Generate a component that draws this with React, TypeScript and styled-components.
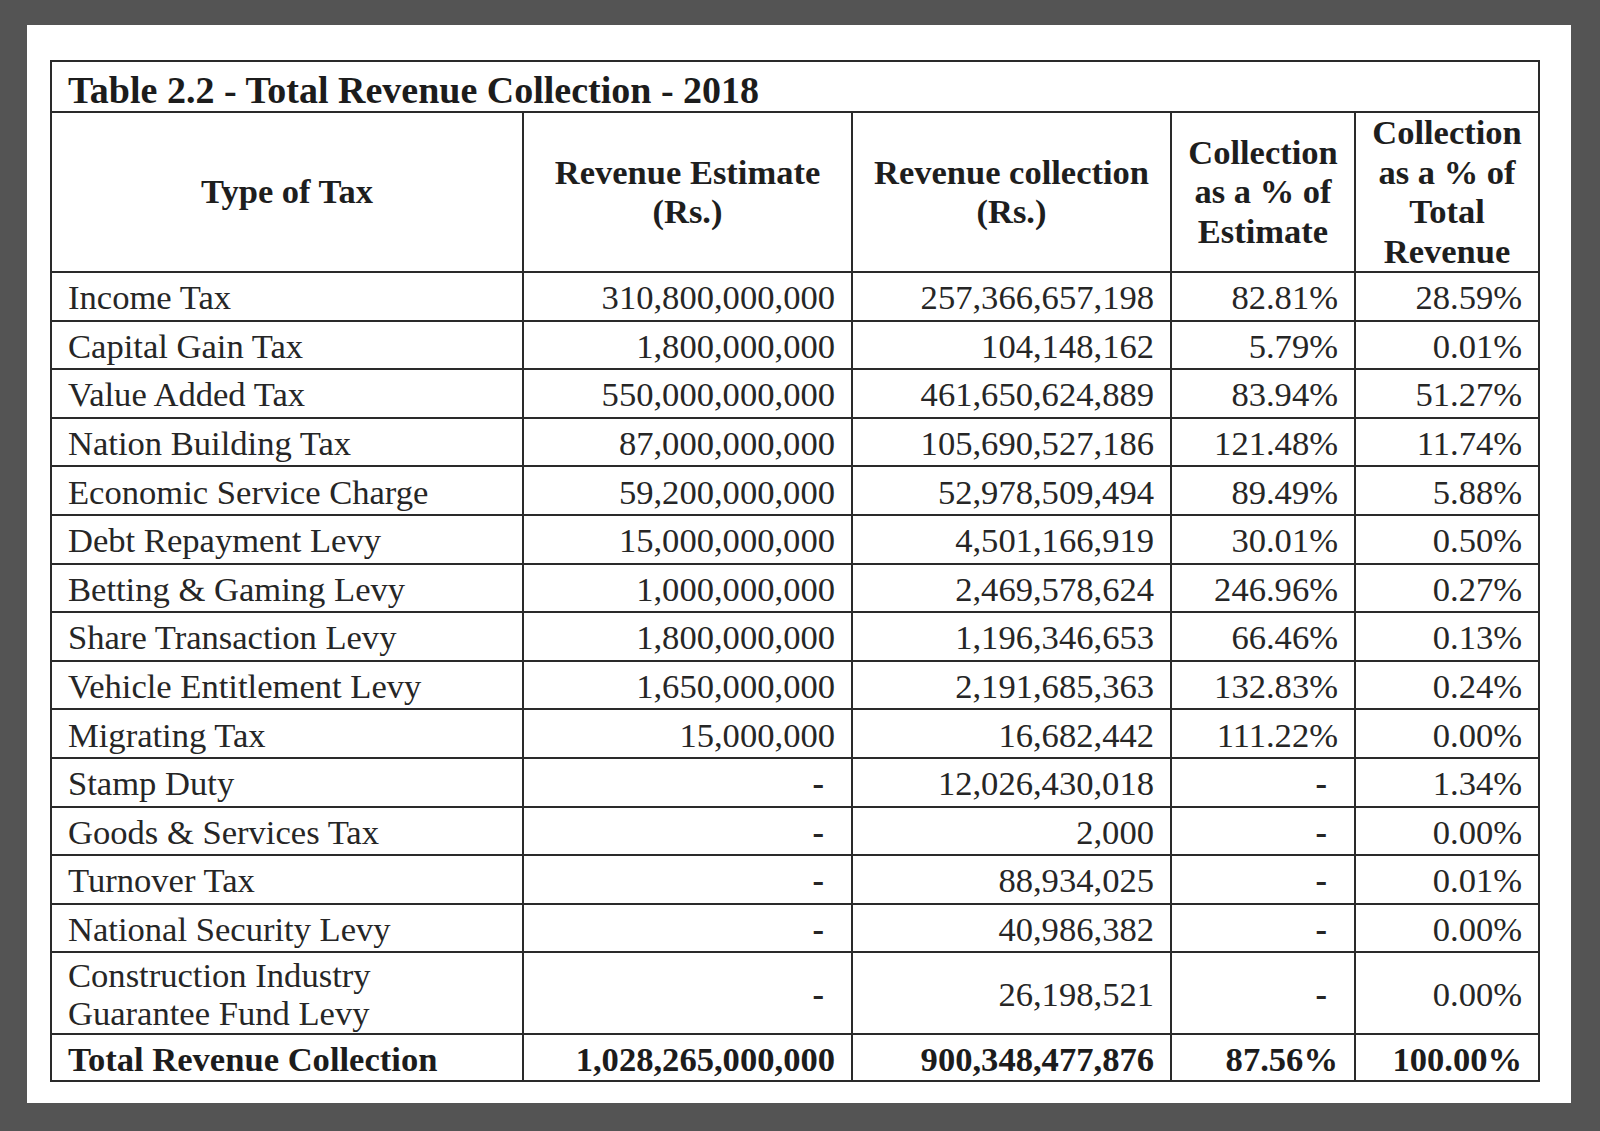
import React from "react";
import styled, { createGlobalStyle } from "styled-components";

const GlobalStyle = createGlobalStyle`
  html, body {
    margin: 0;
    padding: 0;
    background: #545454;
  }
  #root {
    min-height: 1131px;
  }
`;

const Frame = styled.div`
  box-sizing: border-box;
  width: 1600px;
  height: 1131px;
  padding: 25px 29px 28px 27px;
  background: #545454;
`;

const Sheet = styled.div`
  box-sizing: border-box;
  height: 100%;
  background: #ffffff;
  padding: 35px 33px 0 23px;
`;

const Table = styled.table`
  width: 1488px;
  table-layout: fixed;
  border-collapse: collapse;
  font-family: "Liberation Serif", "Times New Roman", serif;
  color: #262626;
  border: 2px solid #2a2a2a;
`;

const TitleRow = styled.tr`
  height: 51px;
`;

const TitleCell = styled.td`
  border: 2px solid #2a2a2a;
  padding: 6px 16px 0 16px;
  font-size: 38px;
  font-weight: bold;
  color: #1c1c1c;
  text-align: left;
  vertical-align: middle;
  line-height: 40px;
  white-space: nowrap;
`;

const HeadRow = styled.tr`
  height: 159px;
`;

const HeadCell = styled.th`
  border: 2px solid #2a2a2a;
  padding: 0 6px;
  font-size: 34.5px;
  font-weight: bold;
  color: #1e1e1e;
  line-height: 39.5px;
  text-align: center;
  vertical-align: middle;
`;

const BodyRow = styled.tr<{ $h: number }>`
  height: ${(p) => p.$h}px;
`;

const Cell = styled.td<{ $align?: "left" | "right"; $bold?: boolean; $dash?: boolean }>`
  border: 2px solid #2a2a2a;
  padding: 2px ${(p) => (p.$dash ? 27 : 16)}px 0 16px;
  font-size: 34.6px;
  line-height: 38px;
  font-weight: ${(p) => (p.$bold || p.$dash ? "bold" : "normal")};
  color: ${(p) => (p.$bold ? "#1c1c1c" : "#262626")};
  text-align: ${(p) => p.$align ?? "right"};
  vertical-align: middle;
  white-space: nowrap;
`;

type Row = {
  name: React.ReactNode;
  est: string;
  col: string;
  pe: string;
  pt: string;
  h?: number;
};

const rows: Row[] = [
  { name: "Income Tax", est: "310,800,000,000", col: "257,366,657,198", pe: "82.81%", pt: "28.59%" },
  { name: "Capital Gain Tax", est: "1,800,000,000", col: "104,148,162", pe: "5.79%", pt: "0.01%" },
  { name: "Value Added Tax", est: "550,000,000,000", col: "461,650,624,889", pe: "83.94%", pt: "51.27%" },
  { name: "Nation Building Tax", est: "87,000,000,000", col: "105,690,527,186", pe: "121.48%", pt: "11.74%" },
  { name: "Economic Service Charge", est: "59,200,000,000", col: "52,978,509,494", pe: "89.49%", pt: "5.88%" },
  { name: "Debt Repayment Levy", est: "15,000,000,000", col: "4,501,166,919", pe: "30.01%", pt: "0.50%" },
  { name: "Betting & Gaming Levy", est: "1,000,000,000", col: "2,469,578,624", pe: "246.96%", pt: "0.27%" },
  { name: "Share Transaction Levy", est: "1,800,000,000", col: "1,196,346,653", pe: "66.46%", pt: "0.13%" },
  { name: "Vehicle Entitlement Levy", est: "1,650,000,000", col: "2,191,685,363", pe: "132.83%", pt: "0.24%" },
  { name: "Migrating Tax", est: "15,000,000", col: "16,682,442", pe: "111.22%", pt: "0.00%" },
  { name: "Stamp Duty", est: "-", col: "12,026,430,018", pe: "-", pt: "1.34%" },
  { name: "Goods & Services Tax", est: "-", col: "2,000", pe: "-", pt: "0.00%" },
  { name: "Turnover Tax", est: "-", col: "88,934,025", pe: "-", pt: "0.01%" },
  { name: "National Security Levy", est: "-", col: "40,986,382", pe: "-", pt: "0.00%" },
  {
    name: (
      <>
        Construction Industry
        <br />
        Guarantee Fund Levy
      </>
    ),
    est: "-",
    col: "26,198,521",
    pe: "-",
    pt: "0.00%",
    h: 82,
  },
];

const Value = ({ v }: { v: string }) => <Cell $dash={v === "-"}>{v}</Cell>;

export default function App() {
  return (
    <>
      <GlobalStyle />
      <Frame>
        <Sheet>
          <Table>
            <colgroup>
              <col style={{ width: 472 }} />
              <col style={{ width: 329 }} />
              <col style={{ width: 319 }} />
              <col style={{ width: 184 }} />
              <col style={{ width: 184 }} />
            </colgroup>
            <tbody>
              <TitleRow>
                <TitleCell colSpan={5}>Table 2.2 - Total Revenue Collection - 2018</TitleCell>
              </TitleRow>
              <HeadRow>
                <HeadCell>Type of Tax</HeadCell>
                <HeadCell>
                  Revenue Estimate
                  <br />
                  (Rs.)
                </HeadCell>
                <HeadCell>
                  Revenue collection
                  <br />
                  (Rs.)
                </HeadCell>
                <HeadCell>
                  Collection
                  <br />
                  as a % of
                  <br />
                  Estimate
                </HeadCell>
                <HeadCell>
                  Collection
                  <br />
                  as a % of
                  <br />
                  Total
                  <br />
                  Revenue
                </HeadCell>
              </HeadRow>
              {rows.map((r, i) => (
                <BodyRow key={i} $h={r.h ?? 48.6}>
                  <Cell $align="left">{r.name}</Cell>
                  <Value v={r.est} />
                  <Value v={r.col} />
                  <Value v={r.pe} />
                  <Value v={r.pt} />
                </BodyRow>
              ))}
              <BodyRow $h={47}>
                <Cell $align="left" $bold>
                  Total Revenue Collection
                </Cell>
                <Cell $bold>1,028,265,000,000</Cell>
                <Cell $bold>900,348,477,876</Cell>
                <Cell $bold>87.56%</Cell>
                <Cell $bold>100.00%</Cell>
              </BodyRow>
            </tbody>
          </Table>
        </Sheet>
      </Frame>
    </>
  );
}
